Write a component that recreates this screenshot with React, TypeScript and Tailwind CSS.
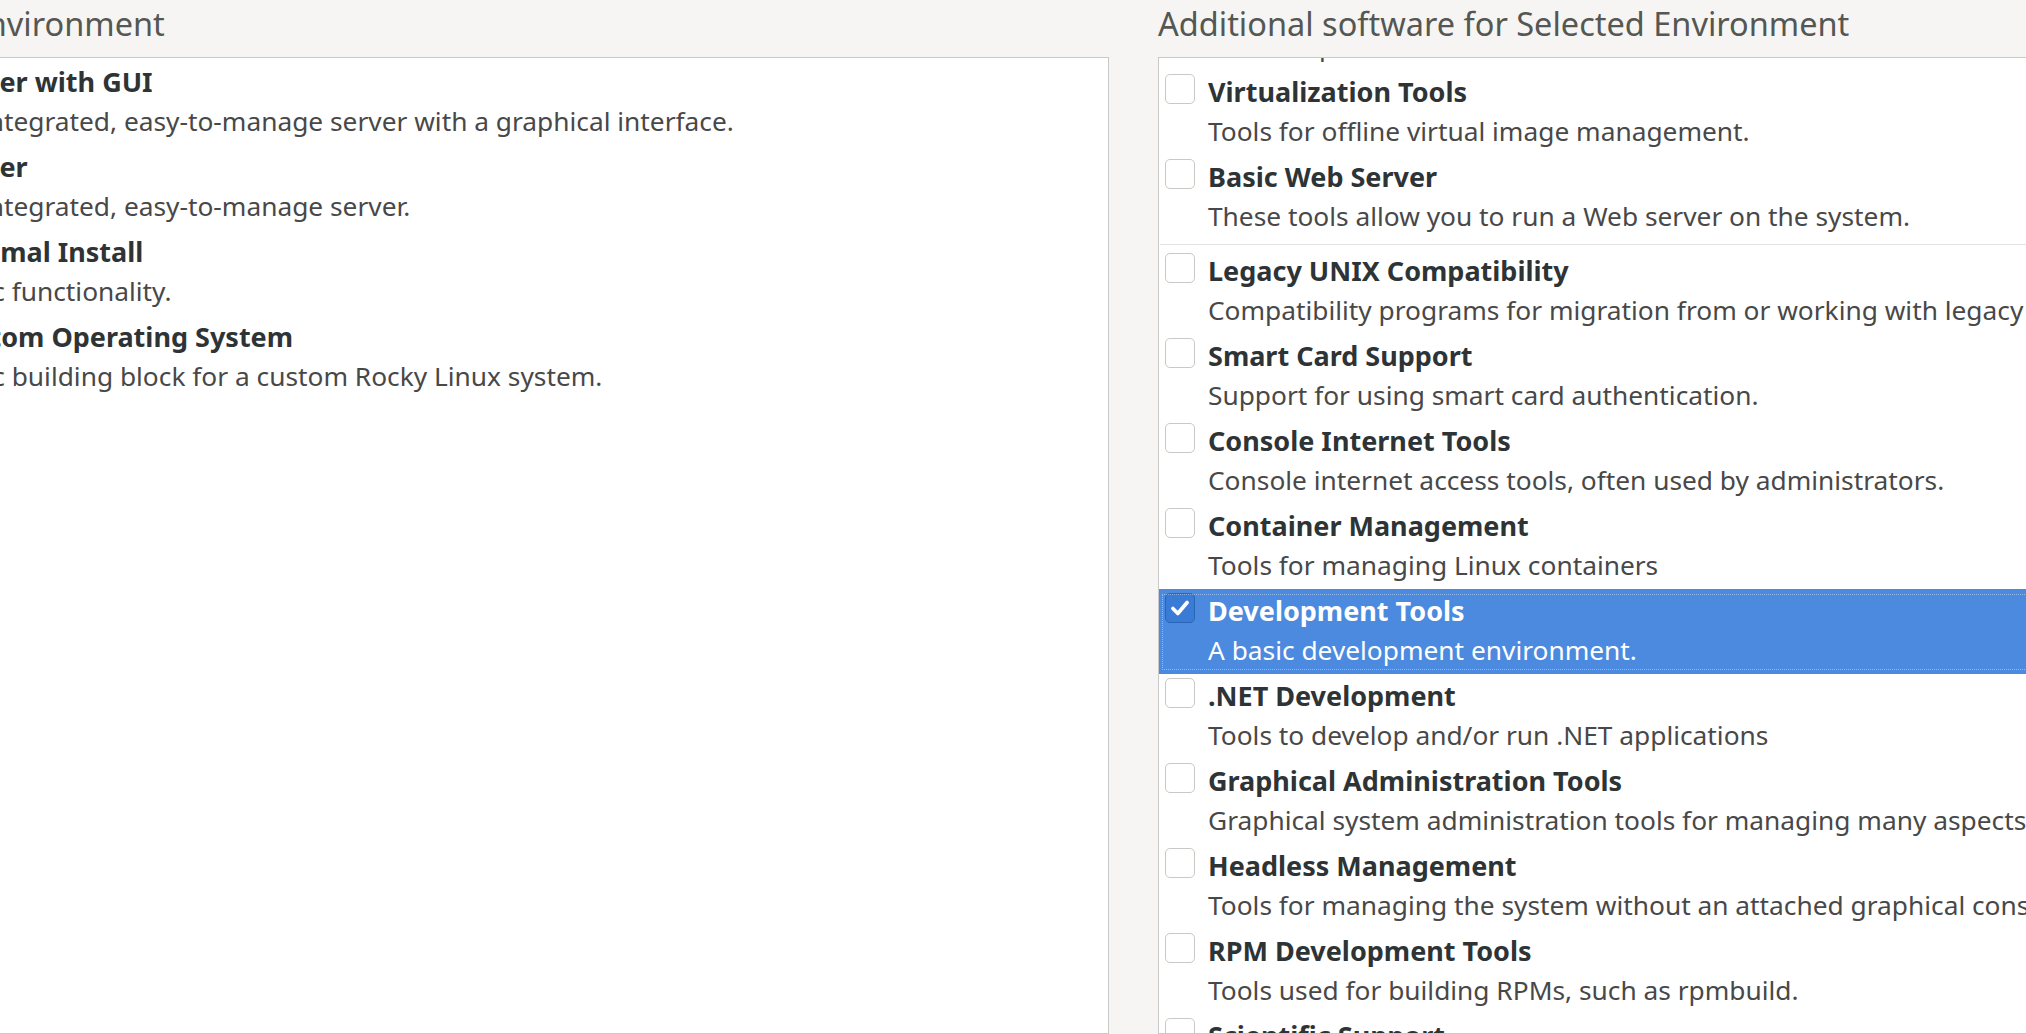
import React from "react";

type Item = { title: string; desc: string; checked?: boolean; selected?: boolean };

const leftItems: Item[] = [
  { title: "Server with GUI", desc: "An integrated, easy-to-manage server with a graphical interface." },
  { title: "Server", desc: "An integrated, easy-to-manage server.", checked: true },
  { title: "Minimal Install", desc: "Basic functionality." },
  { title: "Custom Operating System", desc: "Basic building block for a custom Rocky Linux system." },
];

const rightTop: Item[] = [
  { title: "Virtualization Hypervisor", desc: "Smallest possible virtualization host installation." },
  { title: "Virtualization Tools", desc: "Tools for offline virtual image management." },
  { title: "Basic Web Server", desc: "These tools allow you to run a Web server on the system." },
];

const rightBottom: Item[] = [
  { title: "Legacy UNIX Compatibility", desc: "Compatibility programs for migration from or working with legacy UNIX environments." },
  { title: "Smart Card Support", desc: "Support for using smart card authentication." },
  { title: "Console Internet Tools", desc: "Console internet access tools, often used by administrators." },
  { title: "Container Management", desc: "Tools for managing Linux containers" },
  { title: "Development Tools", desc: "A basic development environment.", checked: true, selected: true },
  { title: ".NET Development", desc: "Tools to develop and/or run .NET applications" },
  { title: "Graphical Administration Tools", desc: "Graphical system administration tools for managing many aspects of a system." },
  { title: "Headless Management", desc: "Tools for managing the system without an attached graphical console." },
  { title: "RPM Development Tools", desc: "Tools used for building RPMs, such as rpmbuild." },
  { title: "Scientific Support", desc: "Tools for mathematical and scientific computations, and parallel computing." },
  { title: "Security Tools", desc: "Security tools for integrity and trust verification." },
];

function CheckBox({ checked }: { checked?: boolean }) {
  if (checked) {
    return (
      <div className="w-[30px] h-[30px] shrink-0 rounded-[5px] bg-[#3a7bd5] border border-[#2b65b5] flex items-center justify-center">
        <svg width="24" height="24" viewBox="0 0 22 22" fill="none">
          <path d="M4.5 11.5 L9 16 L17.5 6" stroke="#ffffff" strokeWidth="3.4" strokeLinecap="round" strokeLinejoin="round" />
        </svg>
      </div>
    );
  }
  return <div className="w-[30px] h-[30px] shrink-0 rounded-[5px] bg-white border border-[#cbc8c5]" />;
}

function Radio({ checked }: { checked?: boolean }) {
  return (
    <div className="w-[30px] h-[30px] shrink-0 rounded-full bg-white border border-[#cbc8c5] flex items-center justify-center">
      {checked ? <div className="w-[12px] h-[12px] rounded-full bg-[#3a7bd5]" /> : null}
    </div>
  );
}

function Row({ item, radio, className = "" }: { item: Item; radio?: boolean; className?: string }) {
  const sel = item.selected;
  return (
    <div className={`relative flex items-start pl-[6px] pt-[4px] pb-[6px] ${sel ? "bg-[#4b8ade]" : ""} ${className}`}>
      {radio ? <Radio checked={item.checked} /> : <CheckBox checked={item.checked} />}
      <div className="ml-[13px] whitespace-nowrap">
        <div className={`text-[27px] leading-[36px] font-bold ${sel ? "text-white" : "text-[#2e3436]"}`}>{item.title}</div>
        <div className={`mt-[3px] text-[26.3px] leading-[36px] ${sel ? "text-white" : "text-[#484848]"}`}>{item.desc}</div>
      </div>
      {sel ? (
        <div className="pointer-events-none absolute left-[3px] right-[3px] top-[5px] bottom-[4px] border border-dotted border-white/40" />
      ) : null}
    </div>
  );
}

export default function App() {
  return (
    <div className="w-[2026px] h-[1034px] overflow-hidden bg-[#f6f5f4] font-['Noto_Sans',sans-serif]">
      <div className="flex h-full ml-[-109px] gap-[49px]">
        <div className="w-[1218px] shrink-0 flex flex-col">
          <div className="h-[57px] shrink-0 pt-[3px] ml-[-4px] text-[32.5px] leading-[42px] text-[#555753] whitespace-nowrap">
            Base Environment
          </div>
          <div className="flex-1 bg-white border border-[#c9c9c9] overflow-hidden pt-[2px]">
            {leftItems.map((it) => (
              <Row key={it.title} item={it} radio />
            ))}
          </div>
        </div>
        <div className="w-[1000px] shrink-0 flex flex-col">
          <div className="h-[57px] shrink-0 pt-[3px] text-[32.5px] leading-[42px] text-[#555753] whitespace-nowrap">
            Additional software for Selected Environment
          </div>
          <div className="flex-1 bg-white border border-[#c9c9c9] border-r-0 overflow-hidden">
            <div className="mt-[-73px]">
              {rightTop.map((it) => (
                <Row key={it.title} item={it} />
              ))}
              <div className="py-[4px]">
                <div className="h-px ml-[1px] bg-[#e3e3e3]" />
              </div>
              {rightBottom.map((it) => (
                <Row key={it.title} item={it} />
              ))}
            </div>
          </div>
        </div>
      </div>
    </div>
  );
}
